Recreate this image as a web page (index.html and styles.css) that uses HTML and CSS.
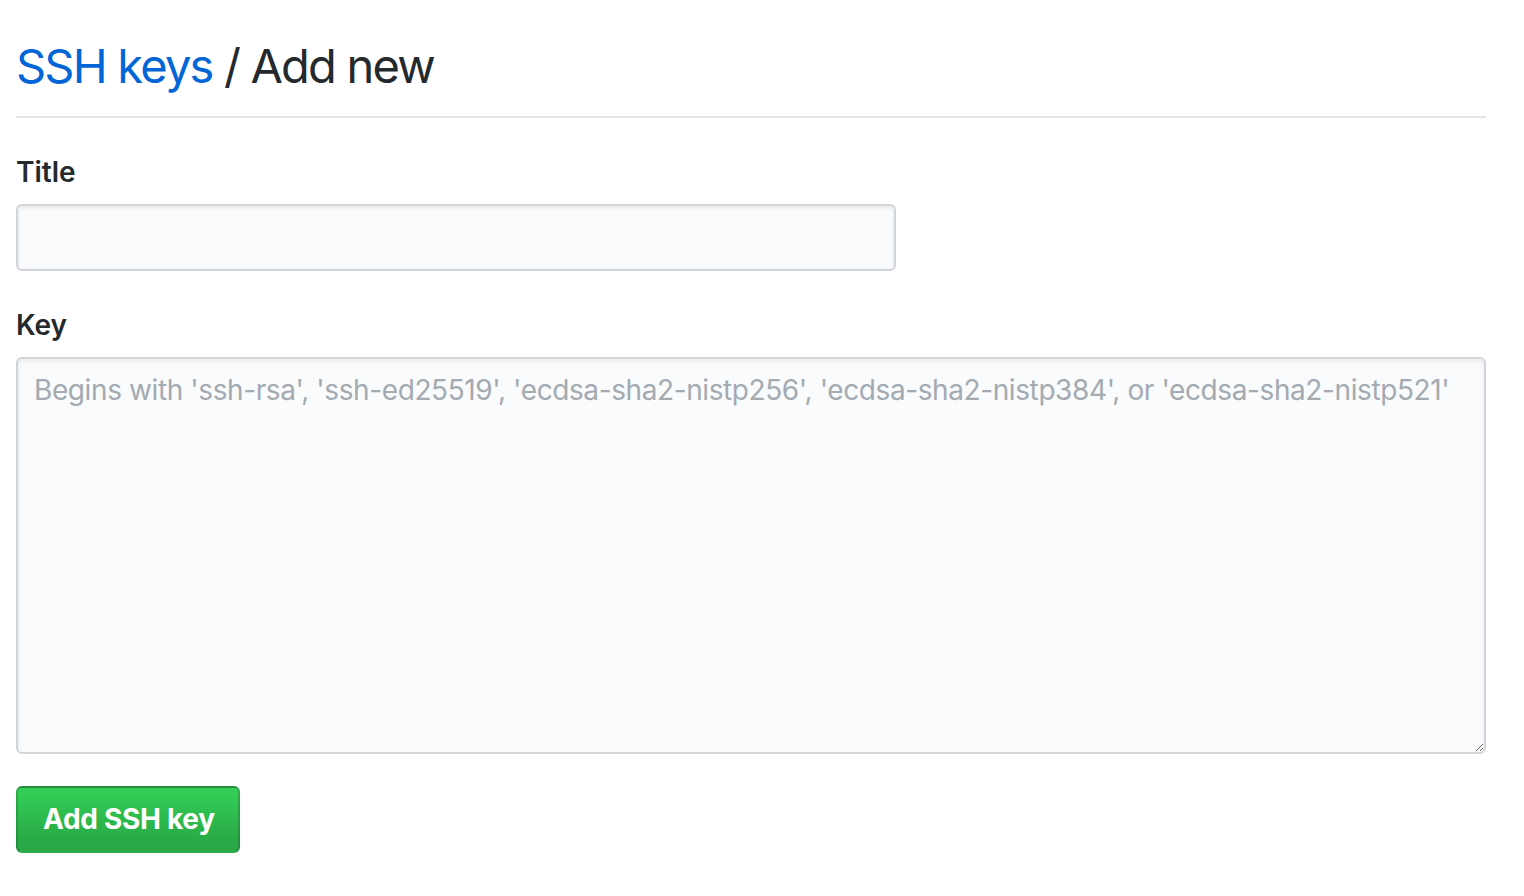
FILE: index.html
```html
<!DOCTYPE html>
<html lang="en">
<head>
<meta charset="utf-8">
<title>Add new SSH key</title>
<link rel="stylesheet" href="styles.css">
</head>
<body>
<div class="page">
  <div class="subhead">
    <h2 class="subhead-heading"><a href="#" class="crumb">SSH keys</a> / Add new</h2>
  </div>
  <form class="form">
    <div class="form-group form-group-first">
      <label class="label" for="title">Title</label>
      <input class="form-control title-input" id="title" type="text">
    </div>
    <div class="form-group">
      <label class="label" for="key">Key</label>
      <textarea class="form-control key-input" id="key" placeholder="Begins with 'ssh-rsa', 'ssh-ed25519', 'ecdsa-sha2-nistp256', 'ecdsa-sha2-nistp384', or 'ecdsa-sha2-nistp521'"></textarea>
    </div>
    <div class="actions">
      <button type="button" class="btn-primary">Add SSH key</button>
    </div>
  </form>
</div>
</body>
</html>
```
FILE: styles.css
```css
* { box-sizing: border-box; }
html, body { margin: 0; padding: 0; background: #fff; }
body {
  font-family: Inter, "Liberation Sans", Arial, sans-serif;
  color: #24292e;
}
.page {
  padding: 0 38px 0 16px;
}
.subhead {
  padding-top: 36px;
  padding-bottom: 20px;
  border-bottom: 2px solid #e1e4e8;
  margin-bottom: 34px;
}
.subhead-heading {
  margin: 0;
  font-size: 47px;
  font-weight: 400;
  line-height: 60px;
  letter-spacing: -1.8px;
}
.crumb {
  color: #0366d6;
  text-decoration: none;
}
.form {
  display: flex;
  flex-direction: column;
}
.form-group {
  display: flex;
  flex-direction: column;
  margin-bottom: 32px;
}
.form-group-first {
  margin-bottom: 34px;
}
.label {
  font-size: 28px;
  font-weight: 600;
  line-height: 40px;
  margin-bottom: 12px;
}
.form-control {
  font-family: inherit;
  font-size: 28px;
  line-height: 40px;
  color: #24292e;
  background: #fafbfc;
  border: 2px solid #d1d5da;
  border-radius: 6px;
  box-shadow: inset 0 2px 4px rgba(27, 31, 35, 0.075);
  padding: 12px 16px;
  outline: none;
}
.title-input {
  width: 880px;
  height: 67px;
}
.key-input {
  width: 100%;
  height: 397px;
  resize: vertical;
  padding-top: 11px;
}
.key-input::placeholder {
  color: #a3aab1;
  letter-spacing: -0.4px;
}
.actions {
  margin-top: 0;
}
.btn-primary {
  font-family: inherit;
  font-size: 28px;
  font-weight: 700;
  line-height: 40px;
  letter-spacing: -0.3px;
  color: #fff;
  background-image: linear-gradient(-180deg, #34d058 0%, #28a745 90%);
  border: 2px solid rgba(27, 31, 35, 0.2);
  border-radius: 6px;
  padding: 11px 23px 12px 25px;
  cursor: pointer;
}
```
